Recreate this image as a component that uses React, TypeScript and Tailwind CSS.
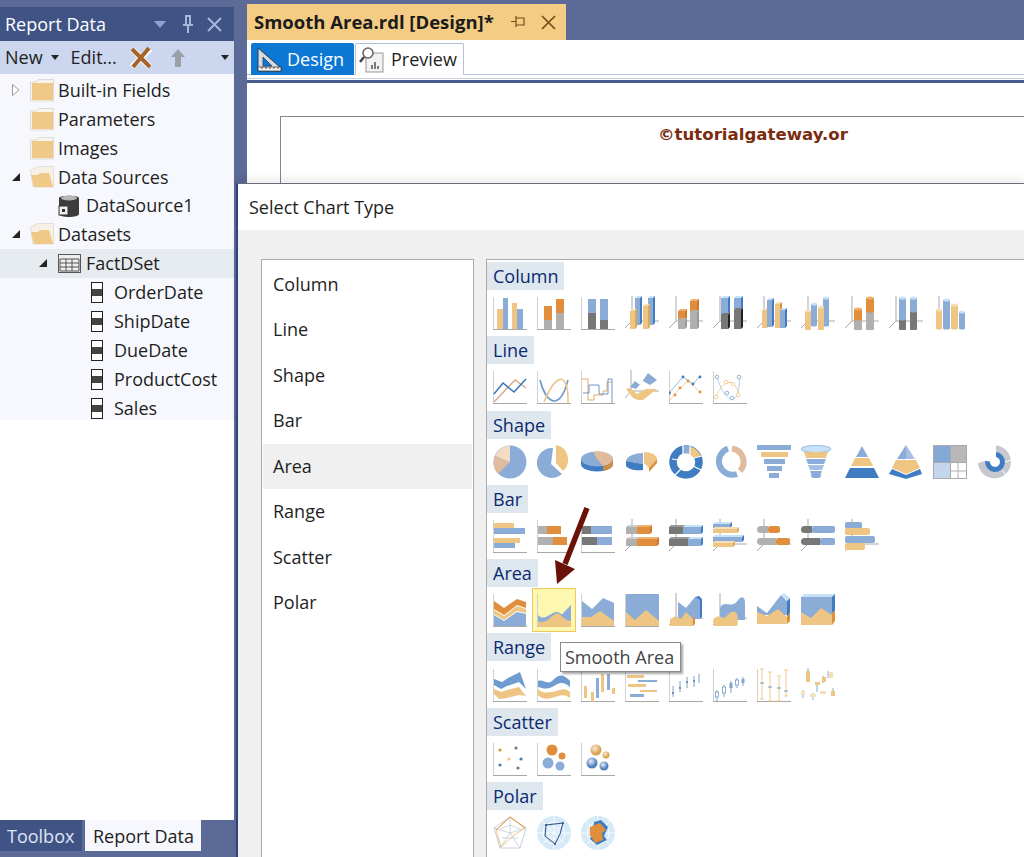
import React from 'react';

const TAN = '#eec583';
const BLUE = '#8aacd6';
const ORG = '#e08e3b';
const GRY = '#b0b0b0';
const DRK = '#777777';
const SB = '#3f7cc2';
const LB = '#c6e2f6';
const PEACH = '#e0bb9e';

const R = ({ x, y, w, h, f }: { x: number; y: number; w: number; h: number; f: string }) => (
  <rect x={x} y={y} width={w} height={h} fill={f} />
);

const P = ({ d, f = 'none', s, sw = 1 }: { d: string; f?: string; s?: string; sw?: number }) => (
  <path d={d} fill={f} stroke={s} strokeWidth={sw} />
);

// flat chart axis (left + bottom)
const Ax = () => (
  <>
    <rect x={0} y={1} width={1} height={33} fill="#d0d0d0" />
    <rect x={0} y={33} width={34} height={1} fill="#a8a8a8" />
  </>
);

// 3d chart axis
const Ax3 = () => <P d="M7 0V25H34M7 25L0 32" s="#aaaaaa" sw={1} />;

const Box = ({ x, y, w, h, f, t, s, d = 3 }: { x: number; y: number; w: number; h: number; f: string; t: string; s: string; d?: number }) => (
  <>
    <polygon points={`${x},${y} ${x + d},${y - d} ${x + w + d},${y - d} ${x + w},${y}`} fill={t} />
    <polygon points={`${x + w},${y} ${x + w + d},${y - d} ${x + w + d},${y + h - d} ${x + w},${y + h}`} fill={s} />
    <rect x={x} y={y} width={w} height={h} fill={f} />
  </>
);

const Cyl = ({ x, y, w, h, f, t }: { x: number; y: number; w: number; h: number; f: string; t?: string }) => (
  <>
    <ellipse cx={x + w / 2} cy={y + h} rx={w / 2} ry={1.6} fill={f} />
    <rect x={x} y={y} width={w} height={h} fill={f} />
    {t && <ellipse cx={x + w / 2} cy={y} rx={w / 2} ry={1.6} fill={t} />}
  </>
);

const HCyl = ({ y, a, b, ca, cb, x = 0 }: { y: number; a: number; b: number; ca: string; cb: string; x?: number }) => (
  <>
    <rect x={x} y={y} width={a} height={7} rx={3.5} fill={ca} />
    <rect x={x + a - 3} y={y} width={3} height={7} fill={ca} />
    <rect x={x + a} y={y} width={b} height={7} rx={2} fill={cb} />
  </>
);

const Dot = ({ x, y, c, r = 1.4 }: { x: number; y: number; c: string; r?: number }) => <circle cx={x} cy={y} r={r} fill={c} />;
const Ring = ({ x, y, c }: { x: number; y: number; c: string }) => <circle cx={x} cy={y} r={1.8} fill="#fff" stroke={c} strokeWidth={0.8} />;

const polarGrid = (
  <>
    <circle cx={17} cy={17} r={17} fill="#d5e9f7" />
    <P d="M17 0V34M0 17H34M5 5L29 29M29 5L5 29" s="#fff" sw={0.8} />
    <circle cx={17} cy={17} r={11} fill="none" stroke="#fff" strokeWidth={0.8} />
    <circle cx={17} cy={17} r={6} fill="none" stroke="#fff" strokeWidth={0.8} />
  </>
);

const sections: { name: string; icons: React.ReactNode[] }[] = [
  {
    name: 'Column',
    icons: [
      <><Ax /><R x={4} y={13} w={6} h={20} f={TAN} /><R x={10} y={2} w={5} h={31} f={BLUE} /><R x={19} y={7} w={5} h={26} f={TAN} /><R x={24} y={13} w={6} h={20} f={BLUE} /></>,
      <><Ax /><R x={7} y={10} w={8} h={14} f={ORG} /><R x={7} y={24} w={8} h={9} f={GRY} /><R x={19} y={3} w={8} h={14} f={ORG} /><R x={19} y={17} w={8} h={16} f={GRY} /></>,
      <><Ax /><R x={7} y={3} w={8} h={14} f={BLUE} /><R x={7} y={17} w={8} h={16} f={DRK} /><R x={19} y={3} w={8} h={21} f={BLUE} /><R x={19} y={24} w={8} h={9} f={DRK} /></>,
      <><Ax3 /><Box x={10} y={2} w={5} h={27} f={BLUE} t={LB} s={SB} d={2} /><Box x={23} y={2} w={5} h={27} f={BLUE} t={LB} s={SB} d={2} /><Box x={5} y={15} w={5} h={18} f={TAN} t="#f7dfb5" s="#d9a95f" d={2} /><Box x={18} y={10} w={5} h={23} f={TAN} t="#f7dfb5" s="#d9a95f" d={2} /></>,
      <><Ax3 /><Box x={9} y={15} w={7} h={9} f={ORG} t="#efb06d" s="#c97a2c" d={2} /><Box x={9} y={24} w={7} h={9} f={GRY} t={GRY} s="#999" d={2} /><Box x={21} y={5} w={7} h={11} f={ORG} t="#efb06d" s="#c97a2c" d={2} /><Box x={21} y={16} w={7} h={17} f={GRY} t={GRY} s="#999" d={2} /></>,
      <><Ax3 /><Box x={8} y={2} w={7} h={17} f={BLUE} t={LB} s={SB} d={2} /><Box x={8} y={19} w={7} h={14} f={DRK} t={DRK} s="#222" d={2} /><Box x={21} y={2} w={7} h={12} f={BLUE} t={LB} s={SB} d={2} /><Box x={21} y={14} w={7} h={19} f={DRK} t={DRK} s="#222" d={2} /></>,
      <><Ax3 /><Box x={5} y={14} w={5} h={18} f={TAN} t="#f7dfb5" s="#d9a95f" d={2} /><Box x={10} y={4} w={5} h={27} f={BLUE} t={LB} s={SB} d={2} /><Box x={18} y={8} w={5} h={24} f={TAN} t="#f7dfb5" s={ORG} d={2} /><Box x={23} y={14} w={5} h={18} f={BLUE} t={LB} s={SB} d={2} /></>,
      <><Ax3 /><Cyl x={10} y={8} w={6} h={21} f={BLUE} t={LB} /><Cyl x={22} y={2} w={6} h={27} f={BLUE} t={LB} /><Cyl x={4} y={15} w={6} h={18} f={TAN} t="#f7dfb5" /><Cyl x={17} y={11} w={6} h={22} f={TAN} t="#f7dfb5" /></>,
      <><Ax3 /><Cyl x={9} y={23} w={8} h={10} f={GRY} /><Cyl x={9} y={13} w={8} h={10} f={ORG} t="#efb06d" /><Cyl x={21} y={15} w={8} h={18} f={GRY} /><Cyl x={21} y={2} w={8} h={13} f={ORG} t="#efb06d" /></>,
      <><Ax3 /><Cyl x={10} y={23} w={7} h={10} f={DRK} /><Cyl x={10} y={2} w={7} h={21} f={BLUE} t={LB} /><Cyl x={21} y={15} w={7} h={18} f={DRK} /><Cyl x={21} y={2} w={7} h={13} f={BLUE} t={LB} /></>,
      <><P d="M6 0V14" s="#aaa" /><Cyl x={3} y={14} w={6} h={18} f={TAN} t="#f7dfb5" /><Cyl x={10} y={4} w={7} h={28} f={BLUE} t={LB} /><Cyl x={18} y={9} w={7} h={23} f={TAN} t="#f7dfb5" /><Cyl x={26} y={16} w={6} h={16} f={BLUE} t={LB} /></>,
    ],
  },
  {
    name: 'Line',
    icons: [
      <><Ax /><P d="M1 32L22 10L33 18" s="#d8a888" sw={1.4} /><P d="M1 24L10 13L21 22L33 9" s="#2f74bd" sw={1.4} /></>,
      <><Ax /><P d="M3 10C8 30 22 45 31 10" s="#6f9bd0" sw={1.6} /><P d="M7 32C14 15 22 5 27 11S31 28 31 33" s={TAN} sw={1.6} /></>,
      <><Ax /><P d="M1 9H7V30H13V25H22V21H26V12H31" s="#e0a050" sw={0.9} /><P d="M2 23H8V15H18V24H27V9H31V33" s="#5a8cc8" sw={0.9} /></>,
      <><P d="M6 0V21H34M6 21L0 28" s="#aaa" /><polygon points="5,17 10,11 15,15 23,3 32,10 25,15 18,11 11,19" fill={BLUE} /><polygon points="1,19 5,18 12,24 21,19 32,19 18,30 13,30 8,28" fill={TAN} /></>,
      <><Ax /><P d="M0 23L14 7L24 14L30 7" s="#7ea5d2" sw={0.8} /><P d="M1 30L11 18L19 11L31 22" s={TAN} sw={0.8} /><Dot x={0.5} y={23} c={SB} /><Dot x={14} y={7} c={SB} /><Dot x={24} y={14} c={SB} /><Dot x={31} y={7} c={SB} /><Dot x={6} y={25} c={ORG} /><Dot x={11} y={18} c={ORG} /><Dot x={19} y={11} c={ORG} /><Dot x={31} y={22} c={ORG} /></>,
      <><Ax /><P d="M4 7C8 20 14 30 20 29S27 12 26 7" s="#a4bfe0" sw={0.8} /><P d="M3 27C6 18 14 10 19 13S25 23 26 24" s={TAN} sw={0.8} /><Ring x={4} y={7} c="#7ea5d2" /><Ring x={26} y={7} c="#7ea5d2" /><Ring x={14} y={23} c="#7ea5d2" /><Ring x={19} y={28} c="#7ea5d2" /><Ring x={3} y={27} c={TAN} /><Ring x={13} y={12} c={TAN} /><Ring x={20} y={14} c={TAN} /><Ring x={25} y={25} c={TAN} /></>,
    ],
  },
  {
    name: 'Shape',
    icons: [
      <><circle cx={17} cy={17} r={16.5} fill={BLUE} /><P d="M17 17V0.5A16.5 16.5 0 0 0 2 11Z" f="#f3dcc4" /><P d="M17 17L2 11A16.5 16.5 0 0 0 5 29Z" f={PEACH} /></>,
      <><P d="M16 3L14 19L25 29A15 15 0 1 1 16 3Z" f={BLUE} /><P d="M19 0A15 15 0 0 1 26 26L19 18Z" f={TAN} /></>,
      <><ellipse cx={16} cy={19} rx={16} ry={7.5} fill={SB} /><rect x={0} y={14} width={32} height={5} fill={SB} /><ellipse cx={16} cy={14} rx={16} ry={7.5} fill={BLUE} /><P d="M12 6.7A16 7.5 0 0 1 32 14A16 7.5 0 0 1 22 21L16 14Z" f={PEACH} /><P d="M32 14V19A16 7.5 0 0 1 22 26V21A16 7.5 0 0 0 32 14Z" f="#cf8a45" /></>,
      <><P d="M18 8A17 9 0 0 0 1 16L18 19Z" f={BLUE} /><P d="M1 16L18 19V25C12 26 4 25 1 21Z" f={SB} /><P d="M19 7C26 7 32 10 32 14L24 23L19 18Z" f={TAN} /><P d="M24 23L32 14V18L24 27Z" f={ORG} /></>,
      <><circle cx={17} cy={17} r={13} fill="none" stroke={SB} strokeWidth={7.5} /><P d="M13 1A16.5 16.5 0 0 1 21 1L20 8.5H14Z" f={BLUE} /><P d="M21 1.5A16.5 16.5 0 0 1 32 11L25 13L20 8Z" f={TAN} /><P d="M14 0V9M21 0V9M25 13L33 11M24 21L32 25M12 24L6 30M3 14L9 15" s="#fff" sw={1.2} /></>,
      <><P d="M15 3.5A13.5 13.5 0 1 0 24 29" s={BLUE} sw={6} /><P d="M19 3.5A13.5 13.5 0 0 1 27 26" s={PEACH} sw={6} /></>,
      <><R x={0} y={0} w={34} h={5} f={BLUE} /><R x={4} y={7} w={27} h={5} f={TAN} /><R x={7} y={14} w={21} h={5} f={BLUE} /><R x={10} y={21} w={15} h={5} f={BLUE} /><R x={12} y={28} w={10} h={5} f={BLUE} /></>,
      <><ellipse cx={15} cy={4} rx={15} ry={3.6} fill={LB} stroke={BLUE} strokeWidth={0.8} /><polygon points="3,7 27,7 25,13 5,13" fill={TAN} /><polygon points="5,14 25,14 23,19 7,19" fill={BLUE} /><polygon points="7,20 23,20 21,25 9,25" fill="#a5c0e2" /><polygon points="9,26 21,26 19,31 11,31" fill={BLUE} /><ellipse cx={15} cy={31} rx={5} ry={2} fill={BLUE} /></>,
      <><polygon points="17,1 23,12 11,12" fill={BLUE} /><polygon points="10,13 24,13 28,21 6,21" fill={TAN} /><polygon points="5,23 29,23 34,33 0,33" fill={SB} /></>,
      <><polygon points="17,0 17,14 8,14" fill={BLUE} /><polygon points="17,0 26,14 17,14" fill="#a5c0e2" /><polygon points="7,15 27,15 31,23 17,29 3,23" fill={TAN} /><polygon points="3,24 17,30 31,24 33,29 17,34 0,29" fill={SB} /></>,
      <><R x={0} y={0} w={34} h={34} f="#a9a9b0" /><R x={1} y={1} w={16} h={16} f="#84a9d4" /><R x={18} y={1} w={15} h={16} f="#b8b8b8" /><R x={1} y={18} w={16} h={15} f="#c5d5ec" /><R x={18} y={18} w={15} h={15} f="#fff" /><P d="M25 18V33M18 26H33" s="#b0b0b0" /></>,
      <><P d="M19 0.5A16.5 16.5 0 1 1 1 18L8 16A9.5 9.5 0 1 0 19 7.5Z" f="#c5c8cf" /><P d="M19 7A10 10 0 1 1 8 16L13 16.5A5 5 0 1 0 19 12Z" f={SB} /><P d="M28 17L34 15M25 25L29 30" s="#fff" /></>,
    ],
  },
  {
    name: 'Bar',
    icons: [
      <><Ax /><R x={1} y={4} w={20} h={5} f={TAN} /><R x={1} y={9} w={31} h={6} f={BLUE} /><R x={1} y={19} w={26} h={5} f={TAN} /><R x={1} y={24} w={21} h={5} f={BLUE} /></>,
      <><Ax /><R x={1} y={7} w={9} h={8} f={GRY} /><R x={10} y={7} w={14} h={8} f={ORG} /><R x={1} y={18} w={15} h={8} f={GRY} /><R x={16} y={18} w={14} h={8} f={ORG} /></>,
      <><Ax /><R x={1} y={7} w={9} h={8} f={DRK} /><R x={10} y={7} w={21} h={8} f={BLUE} /><R x={1} y={18} w={15} h={8} f={DRK} /><R x={16} y={18} w={15} h={8} f={BLUE} /></>,
      <><Ax3 /><Box x={1} y={8} w={11} h={7} f={GRY} t="#ccc" s={GRY} d={2} /><Box x={12} y={8} w={13} h={7} f={ORG} t="#efb06d" s="#c97a2c" d={2} /><Box x={1} y={20} w={11} h={7} f={GRY} t="#ccc" s={GRY} d={2} /><Box x={12} y={20} w={20} h={7} f={ORG} t="#efb06d" s="#c97a2c" d={2} /></>,
      <><Ax3 /><Box x={0} y={8} w={14} h={7} f={DRK} t="#999" s={DRK} d={2} /><Box x={14} y={8} w={18} h={7} f={BLUE} t={LB} s={SB} d={2} /><Box x={0} y={20} w={19} h={7} f={DRK} t="#999" s={DRK} d={2} /><Box x={19} y={20} w={13} h={7} f={BLUE} t={LB} s={SB} d={2} /></>,
      <><Ax3 /><Box x={0} y={5} w={17} h={4} f={BLUE} t={LB} s={SB} d={2} /><Box x={0} y={10} w={24} h={4} f={TAN} t="#f7dfb5" s="#d9a95f" d={2} /><Box x={0} y={18} w={29} h={5} f={BLUE} t={LB} s={SB} d={2} /><Box x={0} y={24} w={20} h={4} f={TAN} t="#f7dfb5" s="#d9a95f" d={2} /></>,
      <><Ax3 /><HCyl y={7} a={11} b={12} ca={GRY} cb={ORG} /><HCyl y={19} a={19} b={14} ca={GRY} cb={ORG} /></>,
      <><Ax3 /><HCyl y={7} a={11} b={23} ca={DRK} cb={BLUE} /><HCyl y={19} a={19} b={15} ca={DRK} cb={BLUE} /></>,
      <><Ax3 /><HCyl y={3} a={0} b={17} ca={BLUE} cb={BLUE} /><HCyl y={9} a={0} b={25} ca={TAN} cb={TAN} /><HCyl y={17} a={0} b={30} ca={BLUE} cb={BLUE} /><HCyl y={24} a={0} b={20} ca={TAN} cb={TAN} /></>,
    ],
  },
  {
    name: 'Area',
    icons: [
      <><Ax /><polygon points="1,8 11,15 24,6 33,9 33,15 24,12 11,22 1,16" fill={ORG} /><polygon points="1,17 11,23 24,13 33,16 33,20 24,18 11,27 1,21" fill={TAN} /><polygon points="1,22 11,28 24,19 33,21 33,33 1,33" fill={BLUE} /></>,
      <><Ax /><P d="M1 22C6 27 9 24 16 20S24 25 27 19L34 12V34H1Z" f={BLUE} /><P d="M1 28C8 32 13 24 18 21S27 28 34 28V34H1Z" f={TAN} /></>,
      <><Ax /><polygon points="1,8 11,16 22,5 33,10 33,33 1,33" fill={BLUE} /><polygon points="1,24 10,24 19,18 33,28 33,33 1,33" fill={TAN} /></>,
      <><Ax /><R x={1} y={1} w={33} h={32} f={BLUE} /><polygon points="1,19 10,27 21,17 34,28 34,33 1,33" fill={TAN} /></>,
      <><Ax3 /><polygon points="9,9 17,15 26,4 31,7 31,26 9,26" fill={BLUE} /><polygon points="26,4 30,3 33,6 33,24 31,26 31,7" fill={SB} /><polygon points="1,26 7,23 12,26 17,19 24,26 24,33 1,33" fill={TAN} /><polygon points="24,26 26,24 26,31 24,33" fill={ORG} /></>,
      <><Ax3 /><P d="M7 15C12 5 18 18 26 6C30 2 32 6 32 10V27H7Z" f={BLUE} /><P d="M0 29C0 24 6 22 10 25C14 25 16 17 22 19C26 20 25 33 24 33H1Z" f={TAN} /></>,
      <><polygon points="0,13 10,20 24,2 30,8 30,22 0,22" fill={BLUE} /><polygon points="24,2 27,0 33,5 30,8" fill={LB} /><polygon points="30,8 33,5 33,20 30,24" fill={SB} /><polygon points="0,19 10,23 21,16 30,24 30,31 0,31" fill={TAN} /><polygon points="30,24 33,20 33,28 30,31" fill={ORG} /></>,
      <><R x={0} y={4} w={31} h={28} f={BLUE} /><polygon points="0,4 3,1 34,1 31,4" fill={LB} /><polygon points="31,4 34,1 34,18 31,20" fill={SB} /><polygon points="0,19 10,25 20,15 31,22 31,32 0,32" fill={TAN} /><polygon points="31,20 34,18 34,28 31,32" fill={ORG} /></>,
    ],
  },
  {
    name: 'Range',
    icons: [
      <><Ax /><polygon points="1,11 9,14 15,10 27,4 33,21 26,14 14,18 8,21 1,17" fill="#6f9bd0" /><polygon points="1,21 8,24 14,22 26,19 33,28 26,27 14,30 6,31 1,26" fill={TAN} /></>,
      <><Ax /><P d="M1 13C6 11 10 17 15 13S24 3 33 13V19C24 12 22 16 15 19S6 20 1 19Z" f="#6f9bd0" /><P d="M1 21C6 26 10 24 15 24S26 18 33 24V30C26 25 22 28 15 30S4 30 1 27Z" f={TAN} /></>,
      <><Ax /><R x={3} y={18} w={3} h={12} f={TAN} /><R x={10} y={24} w={3} h={10} f={TAN} /><R x={15} y={10} w={3} h={20} f={BLUE} /><R x={20} y={6} w={3} h={18} f={TAN} /><R x={26} y={6} w={3} h={16} f={BLUE} /><R x={31} y={20} w={3} h={6} f={TAN} /></>,
      <><Ax /><R x={8} y={1} w={23} h={2} f="#4b7cb8" /><R x={2} y={7} w={17} h={3} f={TAN} /><R x={13} y={12} w={19} h={2} f={BLUE} /><R x={3} y={16} w={18} h={3} f={TAN} /><R x={15} y={22} w={17} h={2} f={TAN} /><R x={5} y={26} w={14} h={3} f={BLUE} /></>,
      <><Ax /><P d="M4 18V29M11 13V24M18 9V20M25 8V19M30 6V15" s="#5c8ac2" sw={0.8} /><P d="M3 25H5M10 20H12M17 14H19M24 13H26" s="#224f8c" sw={1} /></>,
      <><Ax /><P d="M4 22V34M11 17V29M18 13V25M24 10V20M30 9V18" s="#5c8ac2" sw={0.8} /><rect x={2.5} y={24} width={3} height={5} fill="#fff" stroke="#5c8ac2" strokeWidth={0.7} /><rect x={9.5} y={19} width={3} height={6} fill="#fff" stroke="#5c8ac2" strokeWidth={0.7} /><rect x={16.5} y={15} width={3} height={5} fill="#7ea5d2" /><rect x={22.5} y={12} width={3} height={5} fill="#fff" stroke="#5c8ac2" strokeWidth={0.7} /><rect x={28.5} y={11} width={3} height={4} fill="#7ea5d2" /></>,
      <><Ax /><P d="M5 1V31M13 4V33M22 8V33M29 2V28M3 1H7M11 4H15M20 8H24M27 2H31M3 31H7M11 33H15M20 33H24M27 28H31" s={TAN} sw={0.9} /><P d="M3 15H7M11 19H15M20 20H24M27 23H31" s="#5c8ac2" sw={0.9} /></>,
      <><P d="M7 0V14M27 3V10M2 22V30M12 25V32M16 15V24M22 8V15M32 20V28" s="#5c8ac2" sw={0.7} /><R x={5} y={3} w={4} h={11} f={TAN} /><R x={14} y={14} w={5} h={3} f={TAN} /><R x={21} y={9} w={4} h={5} f={TAN} /><R x={28} y={4} w={4} h={6} f="#f5e0bc" /><R x={0} y={23} w={4} h={4} f="#f5e0bc" /><R x={9} y={26} w={6} h={3} f="#f5e0bc" /><R x={19} y={23} w={6} h={3} f="#f5e0bc" /><R x={30} y={23} w={4} h={5} f={TAN} /></>,
    ],
  },
  {
    name: 'Scatter',
    icons: [
      <><Ax /><Dot x={7} y={8} c={ORG} r={1.6} /><Dot x={23} y={6} c={DRK} r={1.6} /><Dot x={16} y={17} c={TAN} r={1.6} /><Dot x={28} y={17} c={SB} r={1.6} /><Dot x={7} y={23} c={SB} r={1.6} /><Dot x={25} y={26} c={DRK} r={1.6} /></>,
      <><Ax /><circle cx={15} cy={8} r={5.5} fill={ORG} /><circle cx={25} cy={14} r={3.5} fill={ORG} /><circle cx={11} cy={21} r={5.5} fill={BLUE} /><circle cx={23} cy={24} r={4.5} fill={BLUE} /></>,
      <><Ax /><defs><radialGradient id="sb1" cx="40%" cy="35%"><stop offset="0%" stopColor="#e8f0fa" /><stop offset="100%" stopColor="#4f80bd" /></radialGradient><radialGradient id="so1" cx="40%" cy="35%"><stop offset="0%" stopColor="#fbeed8" /><stop offset="100%" stopColor="#d9a24f" /></radialGradient></defs><circle cx={15} cy={8} r={5.5} fill="url(#so1)" /><circle cx={25} cy={13} r={3.5} fill="url(#so1)" /><circle cx={11} cy={21} r={5.5} fill="url(#sb1)" /><circle cx={23} cy={24} r={4.5} fill="url(#sb1)" /></>,
    ],
  },
  {
    name: 'Polar',
    icons: [
      <><polygon points="17,1 33,12 27,32 7,32 1,12" fill="#fff" stroke="#b8c4d4" strokeWidth={0.8} /><P d="M17 1V17M33 12L17 17M27 32L17 17M7 32L17 17M1 12L17 17M9 22H25M7 13L17 9L27 13" s="#b8c4d4" sw={0.7} /><polygon points="17,1 32,12 20,20 8,31 3,14" fill="none" stroke={TAN} strokeWidth={1} /><P d="M3 14L17 1L32 12" s={ORG} sw={0.9} /></>,
      <>{polarGrid}<P d="M9 9L26 7L23 18L18 28L8 20Z" s="#1f3a73" sw={0.9} /><Dot x={26} y={7} c="#1f3a73" r={0.9} /><Dot x={18} y={28} c="#1f3a73" r={0.9} /><Dot x={9} y={9} c="#1f3a73" r={0.9} /></>,
      <>{polarGrid}<polygon points="13,6 20,4 27,11 23,20 26,24 16,29 9,23 12,18" fill={SB} /><polygon points="9,11 19,7 25,14 21,17 22,24 14,27 9,19" fill={ORG} /></>,
    ],
  },
];

const listItems = ['Column', 'Line', 'Shape', 'Bar', 'Area', 'Range', 'Scatter', 'Polar'];

const Folder = ({ open }: { open?: boolean }) => (
  <svg width="24" height="24" viewBox="0 0 24 24">
    {open ? (
      <>
        <path d="M0.5 5L8 1.5H23.5V22H3Z" fill="#f7f0e4" stroke="#e3e0da" />
        <path d="M1 10H8L10 8H19L23 22H4Z" fill="#f0c987" />
      </>
    ) : (
      <>
        <path d="M0.5 4H6L8 1.5H23.5V23H0.5Z" fill="#f8f4ec" stroke="#dedbd5" />
        <rect x="2" y="5" width="21" height="17" fill="#f0c987" />
      </>
    )}
  </svg>
);

const Field = () => (
  <svg width="12" height="21" viewBox="0 0 12 21">
    <rect x="0.5" y="0.5" width="11" height="20" fill="#fff" stroke="#222" />
    <rect x="1" y="7" width="10" height="7" fill="#444" />
  </svg>
);

const Expander = ({ open }: { open?: boolean }) => (
  <svg width="10" height="14" viewBox="0 0 10 14" className="shrink-0">
    {open ? <path d="M1 11H9V3Z" fill="#222" /> : <path d="M1.5 1.5L8 7L1.5 12.5Z" fill="#fff" stroke="#999" />}
  </svg>
);

const FolderRow = ({ label, open, exp }: { label: string; open?: boolean; exp?: 'open' | 'closed' }) => (
  <div className="h-[29px] flex items-center pl-[11px]">
    <div className="w-[19px]">{exp && <Expander open={exp === 'open'} />}</div>
    <Folder open={open} />
    <span className="ml-[4px]">{label}</span>
  </div>
);

const FieldRow = ({ label }: { label: string }) => (
  <div className="h-[29px] flex items-center pl-[91px]">
    <Field />
    <span className="ml-[11px]">{label}</span>
  </div>
);

const Caret = ({ className }: { className?: string }) => (
  <svg width="8" height="5" viewBox="0 0 8 5" className={className}>
    <path d="M0 0H8L4 5Z" fill="#222" />
  </svg>
);

export default function App() {
  return (
    <div
      className="relative w-[1024px] h-[857px] overflow-hidden bg-[#5b6a97] flex text-[#1e1e1e] text-[18px]"
      style={{ fontFamily: '"Open Sans", "Noto Sans", sans-serif' }}
    >
      {/* Report Data panel */}
      <div className="w-[235px] shrink-0 flex flex-col pt-[7px] pr-[1px]">
        <div className="h-[34px] bg-[#3f5385] flex items-center pl-[5px] text-white">
          <span className="flex-1">Report Data</span>
          <svg width="12" height="7" viewBox="0 0 12 7" className="mr-[15px]"><path d="M0 0H12L6 7Z" fill="#8fa1cc" /></svg>
          <svg width="14" height="20" viewBox="0 0 14 20" className="mr-[12px]"><path d="M4 1H10V10H12V12H2V10H4ZM6 3V10H8V3ZM6 12H8V19H6Z" fill="#a8b6d8" fillRule="evenodd" /></svg>
          <svg width="15" height="15" viewBox="0 0 15 15" className="mr-[12px]"><path d="M1 1L14 14M14 1L1 14" stroke="#a8b6d8" strokeWidth="2" /></svg>
        </div>
        <div className="h-[33px] bg-[#ccd6ee] flex items-center pl-[5px]">
          <span>New</span>
          <Caret className="ml-[8px]" />
          <span className="ml-[12px]">Edit...</span>
          <svg width="24" height="24" viewBox="0 0 24 24" className="ml-[12px]"><path d="M3 3L21 21M21 3L3 21" stroke="#fff" strokeWidth="6" /><path d="M3 3L21 21M20 2L4 21" stroke="#a5622a" strokeWidth="4" /></svg>
          <svg width="14" height="18" viewBox="0 0 14 18" className="ml-[18px]"><path d="M7 0L14 8H10V18H4V8H0Z" fill="#9aa0a8" /></svg>
          <Caret className="ml-[36px]" />
        </div>
        <div className="h-[346px] bg-[#f6f8fd] pt-[1.5px]">
          <FolderRow label="Built-in Fields" exp="closed" />
          <FolderRow label="Parameters" />
          <FolderRow label="Images" />
          <FolderRow label="Data Sources" open exp="open" />
          <div className="h-[28px] flex items-center pl-[58px]">
            <svg width="22" height="24" viewBox="0 0 22 24">
              <path d="M1 4C1 1 21 1 21 4V20C21 24 1 24 1 20Z" fill="#3c3c3c" />
              <ellipse cx="11" cy="4" rx="8" ry="2.5" fill="#b5b5b5" />
              <rect x="1" y="12" width="9" height="9" fill="#eee" stroke="#333" />
              <rect x="4" y="15" width="3" height="3" fill="#333" />
            </svg>
            <span className="ml-[6px]">DataSource1</span>
          </div>
          <FolderRow label="Datasets" open exp="open" />
          <div className="h-[29px] flex items-center pl-[38px] bg-[#e6ebf0]">
            <div className="w-[20px]"><Expander open /></div>
            <svg width="23" height="19" viewBox="0 0 23 19">
              <rect x="0.5" y="0.5" width="22" height="18" fill="#eee" stroke="#555" />
              <path d="M2 5H21V17H2ZM2 9H21M2 13H21M8 5V17M14 5V17" fill="none" stroke="#555" />
            </svg>
            <span className="ml-[5px]">FactDSet</span>
          </div>
          <FieldRow label="OrderDate" />
          <FieldRow label="ShipDate" />
          <FieldRow label="DueDate" />
          <FieldRow label="ProductCost" />
          <FieldRow label="Sales" />
        </div>
        <div className="flex-1 bg-white" />
        <div className="h-[37px] flex items-start">
          <div className="h-[31px] w-[82px] bg-[#3f5385] text-[#dfe5f4] flex items-center pl-[7px] pt-[2px]">Toolbox</div>
          <div className="h-[31px] w-[116px] ml-[3px] bg-[#f6f8fd] flex items-center pl-[8px] pt-[2px]">Report Data</div>
        </div>
      </div>

      {/* Document area */}
      <div className="flex-1 pl-[12px] pt-[4px] flex flex-col">
        <div className="h-[36px] w-[319px] bg-[#f5cc84] flex items-center pl-[7px] font-bold text-[18.5px] text-[#1b1b1b]">
          <span className="flex-1 whitespace-nowrap">Smooth Area.rdl [Design]*</span>
          <svg width="14" height="14" viewBox="0 0 14 14" className="mr-[16px]"><path d="M5 3H13V10H5ZM5 6.5H0M5 1V12" fill="none" stroke="#7a4a1a" strokeWidth="1.2" /></svg>
          <svg width="15" height="15" viewBox="0 0 15 15" className="mr-[10px]"><path d="M1 1L14 14M14 1L1 14" stroke="#7a4a1a" strokeWidth="1.7" /></svg>
        </div>
        <div className="flex-1 bg-white">
          <div className="h-[35px] pt-[3px] pl-[4px] flex border-b border-[#b3bfdc]">
            <div className="w-[103px] h-[32px] bg-[#0c78d4] text-white flex items-center pl-[4px] rounded-t-[2px]">
              <svg width="28" height="26" viewBox="0 0 28 26">
                <path d="M3 2L26 22V25H3Z" fill="#d5dbe2" stroke="#333f50" strokeWidth="1" />
                <path d="M8 11L17 20H8Z" fill="#0c78d4" stroke="#333f50" strokeWidth="0.8" />
                <path d="M3 21H26V25H3Z" fill="#f0f0f0" stroke="#333" strokeWidth="0.7" />
                <path d="M7 21V23M11 21V23M15 21V23M19 21V23M23 21V23" stroke="#333" strokeWidth="0.8" />
              </svg>
              <span className="ml-[4px]">Design</span>
            </div>
            <div className="w-[109px] h-[32px] ml-[1px] bg-white border border-b-0 border-[#b3bfdc] flex items-center pl-[3px] rounded-t-[2px]">
              <svg width="26" height="26" viewBox="0 0 26 26">
                <rect x="7" y="6" width="17" height="19" fill="#f2f2f2" stroke="#999" />
                <path d="M13 22V18M16 22V15M19 22V19" stroke="#555" strokeWidth="1.5" />
                <circle cx="9" cy="6" r="5" fill="#fff" stroke="#666" strokeWidth="1.6" />
                <path d="M5 10L1 15" stroke="#444" strokeWidth="2.5" />
              </svg>
              <span className="ml-[6px]">Preview</span>
            </div>
          </div>
          <div className="mt-[3px] border-t border-[#c9cfdf] h-[2px]" />
          <div className="h-[3px] bg-[#4a5b8f]" />
          <div className="ml-[33px] mt-[33px] h-[70px] border-l border-t border-[#808890] pl-[377px] overflow-hidden">
            <span
              className="block mt-[6px] whitespace-nowrap font-bold text-[#7a2c10] text-[16.6px]"
              style={{ fontFamily: '"DejaVu Sans", sans-serif' }}
            >
              ©tutorialgateway.or
            </span>
          </div>
        </div>
      </div>

      {/* Select Chart Type dialog */}
      <div className="absolute left-[236px] top-[183px] right-0 bottom-0 bg-[#f0f0f0] border-t border-l-2 border-t-[#666c78] border-l-[#2f4478] shadow-[0_-6px_6px_rgba(0,0,0,0.06)] flex flex-col">
        <div className="h-[46px] bg-white flex items-center pl-[11px]">Select Chart Type</div>
        <div className="flex-1 flex pl-[23px] pt-[29px]">
          <div className="w-[213px] bg-white border border-[#ababab] border-b-0 pt-[1.5px] px-[1px]">
            {listItems.map((item) => (
              <div
                key={item}
                className={`h-[45.5px] flex items-center pl-[10px] ${item === 'Area' ? 'bg-[#f0f0f0]' : ''}`}
              >
                {item}
              </div>
            ))}
          </div>
          <div className="flex-1 ml-[12px] bg-white border-l border-t border-[#ababab] pt-[2px]">
            {sections.map((section) => (
              <div key={section.name}>
                <div className="h-[28px] flex">
                  <div className="h-[28px] bg-[#dee6ee] text-[#0a2a6e] flex items-center px-[6px] pt-[1px]">{section.name}</div>
                </div>
                <div className="h-[46.3px] flex items-center pl-[1px]">
                  {section.icons.map((icon, i) => {
                    const selected = section.name === 'Area' && i === 1;
                    return (
                      <div
                        key={i}
                        className={`w-[44px] h-[44px] shrink-0 flex items-center justify-center ${selected ? 'bg-[#fdf7b0] border border-[#f0c860]' : ''}`}
                      >
                        <svg width="34" height="34" viewBox="0 0 34 34">{icon}</svg>
                      </div>
                    );
                  })}
                </div>
              </div>
            ))}
          </div>
        </div>
      </div>

      {/* Tooltip */}
      <div className="absolute left-[560px] top-[642px] w-[121px] h-[30px] bg-white border border-[#8a8a8a] shadow-[2px_2px_2px_rgba(0,0,0,0.35)] flex items-center pl-[4px] text-[#444] text-[18px] whitespace-nowrap">
        Smooth Area
      </div>

      {/* Annotation arrow */}
      <svg className="absolute left-[545px] top-[500px]" width="50" height="90" viewBox="0 0 50 90">
        <path d="M42 8L20 64" stroke="#6b1208" strokeWidth="5.5" />
        <path d="M12 84L10 60L30 69Z" fill="#6b1208" />
      </svg>
    </div>
  );
}
